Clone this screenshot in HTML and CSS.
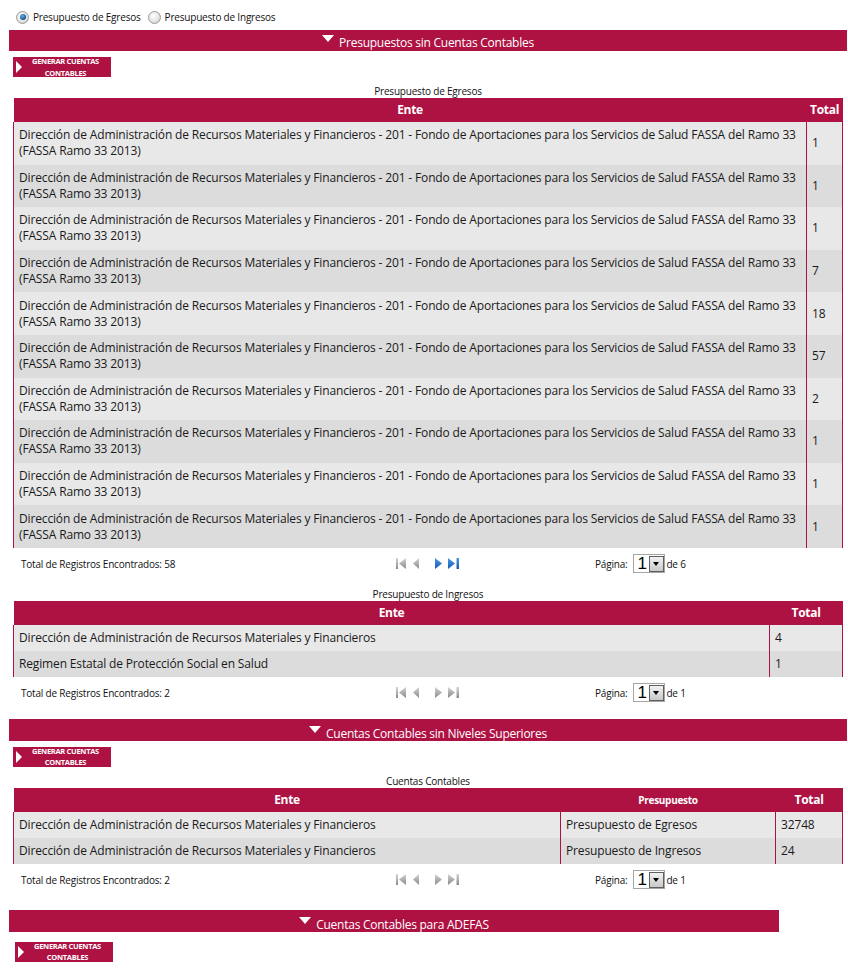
FILE: index.html
```html
<!DOCTYPE html>
<html lang="es">
<head>
  <meta charset="UTF-8" />
  <title>Cuentas Contables</title>
  <link rel="stylesheet" href="styles.css">
</head>
<body>
  <div class="page">
    <div class="radios">
      <label class="radio"><span class="radio-dot checked"></span>Presupuesto de Egresos</label>
      <label class="radio"><span class="radio-dot"></span>Presupuesto de Ingresos</label>
    </div>

    <!-- Presupuestos sin cuentas -->
    <div class="bar"><span class="bar-arrow"></span><span class="bar-title">Presupuestos sin Cuentas Contables</span></div>
    <div class="section">
      <a class="btn-generar"><span class="btn-arrow"></span><span class="btn-text">GENERAR CUENTAS<br>CONTABLES</span></a>
      <div class="caption">Presupuesto de Egresos</div>
      <table class="grid grid-egresos">
        <colgroup><col><col class="w-total-1"></colgroup>
        <thead><tr><th>Ente</th><th>Total</th></tr></thead>
        <tbody>
          <tr><td>Dirección de Administración de Recursos Materiales y Financieros - 201 - Fondo de Aportaciones para los Servicios de Salud FASSA del Ramo 33 (FASSA Ramo 33 2013)</td><td class="num">1</td></tr>
          <tr><td>Dirección de Administración de Recursos Materiales y Financieros - 201 - Fondo de Aportaciones para los Servicios de Salud FASSA del Ramo 33 (FASSA Ramo 33 2013)</td><td class="num">1</td></tr>
          <tr><td>Dirección de Administración de Recursos Materiales y Financieros - 201 - Fondo de Aportaciones para los Servicios de Salud FASSA del Ramo 33 (FASSA Ramo 33 2013)</td><td class="num">1</td></tr>
          <tr><td>Dirección de Administración de Recursos Materiales y Financieros - 201 - Fondo de Aportaciones para los Servicios de Salud FASSA del Ramo 33 (FASSA Ramo 33 2013)</td><td class="num">7</td></tr>
          <tr><td>Dirección de Administración de Recursos Materiales y Financieros - 201 - Fondo de Aportaciones para los Servicios de Salud FASSA del Ramo 33 (FASSA Ramo 33 2013)</td><td class="num">18</td></tr>
          <tr><td>Dirección de Administración de Recursos Materiales y Financieros - 201 - Fondo de Aportaciones para los Servicios de Salud FASSA del Ramo 33 (FASSA Ramo 33 2013)</td><td class="num">57</td></tr>
          <tr><td>Dirección de Administración de Recursos Materiales y Financieros - 201 - Fondo de Aportaciones para los Servicios de Salud FASSA del Ramo 33 (FASSA Ramo 33 2013)</td><td class="num">2</td></tr>
          <tr><td>Dirección de Administración de Recursos Materiales y Financieros - 201 - Fondo de Aportaciones para los Servicios de Salud FASSA del Ramo 33 (FASSA Ramo 33 2013)</td><td class="num">1</td></tr>
          <tr><td>Dirección de Administración de Recursos Materiales y Financieros - 201 - Fondo de Aportaciones para los Servicios de Salud FASSA del Ramo 33 (FASSA Ramo 33 2013)</td><td class="num">1</td></tr>
          <tr><td>Dirección de Administración de Recursos Materiales y Financieros - 201 - Fondo de Aportaciones para los Servicios de Salud FASSA del Ramo 33 (FASSA Ramo 33 2013)</td><td class="num">1</td></tr>
        </tbody>
      </table>
      <div class="pager">
        <span class="pager-total">Total de Registros Encontrados: 58</span>
        <span class="pager-nav">
          <svg class="ico ico-first" viewBox="0 0 10 11"><rect x="0" y="0" width="2" height="11" fill="url(#g-gray)"/><path d="M10 0 L3 5.5 L10 11 Z" fill="url(#g-gray)"/></svg>
          <svg class="ico ico-prev" viewBox="0 0 6 11"><path d="M6 0 L0 5.5 L6 11 Z" fill="url(#g-gray)"/></svg>
          <svg class="ico ico-next" viewBox="0 0 7 11"><path d="M0 0 L7 5.5 L0 11 Z" fill="url(#g-blue)"/></svg>
          <svg class="ico ico-last" viewBox="0 0 11 11"><path d="M0 0 L7 5.5 L0 11 Z" fill="url(#g-blue)"/><rect x="8.5" y="0" width="2.5" height="11" fill="url(#g-blue)"/></svg>
        </span>
        <span class="pager-page">Página: <span class="select"><span class="select-val">1</span><span class="select-btn"></span></span> de 6</span>
      </div>

      <div class="caption">Presupuesto de Ingresos</div>
      <table class="grid">
        <colgroup><col><col class="w-total-2"></colgroup>
        <thead><tr><th>Ente</th><th>Total</th></tr></thead>
        <tbody>
          <tr><td>Dirección de Administración de Recursos Materiales y Financieros</td><td class="num">4</td></tr>
          <tr><td>Regimen Estatal de Protección Social en Salud</td><td class="num">1</td></tr>
        </tbody>
      </table>
      <div class="pager">
        <span class="pager-total">Total de Registros Encontrados: 2</span>
        <span class="pager-nav">
          <svg class="ico ico-first" viewBox="0 0 10 11"><rect x="0" y="0" width="2" height="11" fill="url(#g-gray)"/><path d="M10 0 L3 5.5 L10 11 Z" fill="url(#g-gray)"/></svg>
          <svg class="ico ico-prev" viewBox="0 0 6 11"><path d="M6 0 L0 5.5 L6 11 Z" fill="url(#g-gray)"/></svg>
          <svg class="ico ico-next" viewBox="0 0 7 11"><path d="M0 0 L7 5.5 L0 11 Z" fill="url(#g-gray)"/></svg>
          <svg class="ico ico-last" viewBox="0 0 11 11"><path d="M0 0 L7 5.5 L0 11 Z" fill="url(#g-gray)"/><rect x="8.5" y="0" width="2.5" height="11" fill="url(#g-gray)"/></svg>
        </span>
        <span class="pager-page">Página: <span class="select"><span class="select-val">1</span><span class="select-btn"></span></span> de 1</span>
      </div>
    </div>

    <!-- Cuentas sin niveles superiores -->
    <div class="bar bar-gap"><span class="bar-arrow"></span><span class="bar-title">Cuentas Contables sin Niveles Superiores</span></div>
    <div class="section">
      <a class="btn-generar"><span class="btn-arrow"></span><span class="btn-text">GENERAR CUENTAS<br>CONTABLES</span></a>
      <div class="caption">Cuentas Contables</div>
      <table class="grid">
        <colgroup><col><col class="w-presupuesto"><col class="w-total-3"></colgroup>
        <thead><tr><th>Ente</th><th class="th-small">Presupuesto</th><th>Total</th></tr></thead>
        <tbody>
          <tr><td>Dirección de Administración de Recursos Materiales y Financieros</td><td>Presupuesto de Egresos</td><td class="num">32748</td></tr>
          <tr><td>Dirección de Administración de Recursos Materiales y Financieros</td><td>Presupuesto de Ingresos</td><td class="num">24</td></tr>
        </tbody>
      </table>
      <div class="pager">
        <span class="pager-total">Total de Registros Encontrados: 2</span>
        <span class="pager-nav">
          <svg class="ico ico-first" viewBox="0 0 10 11"><rect x="0" y="0" width="2" height="11" fill="url(#g-gray)"/><path d="M10 0 L3 5.5 L10 11 Z" fill="url(#g-gray)"/></svg>
          <svg class="ico ico-prev" viewBox="0 0 6 11"><path d="M6 0 L0 5.5 L6 11 Z" fill="url(#g-gray)"/></svg>
          <svg class="ico ico-next" viewBox="0 0 7 11"><path d="M0 0 L7 5.5 L0 11 Z" fill="url(#g-gray)"/></svg>
          <svg class="ico ico-last" viewBox="0 0 11 11"><path d="M0 0 L7 5.5 L0 11 Z" fill="url(#g-gray)"/><rect x="8.5" y="0" width="2.5" height="11" fill="url(#g-gray)"/></svg>
        </span>
        <span class="pager-page">Página: <span class="select"><span class="select-val">1</span><span class="select-btn"></span></span> de 1</span>
      </div>
    </div>

    <!-- ADEFAS -->
    <div class="bar bar-short"><span class="bar-arrow"></span><span class="bar-title">Cuentas Contables para ADEFAS</span></div>
    <div class="section section-adefas">
      <a class="btn-generar"><span class="btn-arrow"></span><span class="btn-text">GENERAR CUENTAS<br>CONTABLES</span></a>
    </div>
  </div>

  <svg class="defs" width="0" height="0">
    <defs>
      <linearGradient id="g-gray" x1="0" y1="0" x2="0" y2="1">
        <stop offset="0" stop-color="#d4d4d4"/>
        <stop offset="1" stop-color="#8a8a8a"/>
      </linearGradient>
      <linearGradient id="g-blue" x1="0" y1="0" x2="0" y2="1">
        <stop offset="0" stop-color="#4a9ae8"/>
        <stop offset="1" stop-color="#1658b0"/>
      </linearGradient>
    </defs>
  </svg>
</body>
</html>
```
FILE: styles.css
```css
body {
  margin: 0;
  background: #fff;
  font-family: "Open Sans", "Noto Sans", sans-serif;
  color: #111;
}
.page {
  padding: 10px 1px 0 9px;
}
.radios {
  display: flex;
  align-items: center;
  gap: 7px;
  height: 14px;
  padding-left: 7px;
  font-size: 10px;
  letter-spacing: -0.2px;
}
.radio {
  display: flex;
  align-items: center;
  gap: 4px;
}
.radio-dot {
  width: 11px;
  height: 11px;
  border-radius: 50%;
  border: 1px solid #9a9a9a;
  background: radial-gradient(circle at 40% 35%, #ffffff 0, #e4e4e4 55%, #c4c4c4 100%);
  position: relative;
}
.radio-dot.checked::after {
  content: "";
  position: absolute;
  left: 2.5px;
  top: 2.5px;
  width: 6px;
  height: 6px;
  border-radius: 50%;
  background: radial-gradient(circle at 40% 35%, #6ab0e8 0, #1d5f9c 60%, #0c3a66 100%);
}
.bar {
  margin-top: 6px;
  height: 21px;
  box-sizing: border-box;
  padding-top: 4px;
  width: 838px;
  background: #ae1243;
  color: #fff;
  display: flex;
  align-items: flex-start;
  justify-content: center;
  gap: 5px;
}
.bar-title {
  font-size: 12px;
  line-height: 17px;
  letter-spacing: -0.25px;
}
.bar-gap {
  margin-top: 10px;
  height: 22px;
  padding-top: 6px;
}
.bar-short {
  margin-top: 14px;
  width: 770px;
  height: 22px;
  padding-top: 6px;
}
.bar-arrow {
  width: 0;
  height: 0;
  margin-top: 1px;
  border-left: 6px solid transparent;
  border-right: 6px solid transparent;
  border-top: 7px solid #fff;
}
.section {
  padding: 6px 4px 0 4px;
  width: 830px;
}
.section-adefas {
  padding: 10px 6px 0;
}
.btn-generar {
  display: flex;
  align-items: center;
  width: 98px;
  height: 20px;
  background: #ae1243;
  color: #fff;
  overflow: hidden;
}
.btn-arrow {
  width: 0;
  height: 0;
  margin-left: 3px;
  border-top: 6px solid transparent;
  border-bottom: 6px solid transparent;
  border-left: 6px solid #fff;
}
.btn-text {
  flex: 1;
  text-align: center;
  font-size: 7.5px;
  font-weight: bold;
  line-height: 11.5px;
  letter-spacing: -0.3px;
  padding: 1px 2px 0 0;
}
.caption {
  margin-top: 8px;
  height: 13px;
  line-height: 13px;
  text-align: center;
  font-size: 10px;
  letter-spacing: -0.2px;
}
.grid {
  width: 830px;
  border-collapse: collapse;
  table-layout: fixed;
  font-size: 12px;
  letter-spacing: -0.15px;
}
.w-total-1 { width: 36px; }
.w-total-2 { width: 73px; }
.w-total-3 { width: 67px; }
.w-presupuesto { width: 215px; }
.grid th {
  background: #ae1243;
  color: #fff;
  font-weight: bold;
  line-height: 16px;
  padding: 4px 0;
  text-align: center;
  letter-spacing: -0.3px;
}
.grid th.th-small {
  font-size: 10px;
}
.grid td {
  line-height: 16px;
  padding: 5px 5px;
  text-align: left;
  border-left: 1px solid #ae1243;
  color: #1a1a1a;
}
.grid td:last-child {
  border-right: 1px solid #ae1243;
}
.grid tbody tr:nth-child(odd) td {
  background: #e8e8e8;
}
.grid tbody tr:nth-child(even) td {
  background: #dcdcdc;
}
.grid-egresos td {
  height: 32.6px;
}
.grid td.num {
  vertical-align: middle;
}
.pager {
  display: grid;
  grid-template-columns: 382px 200px auto;
  align-items: center;
  height: 32px;
  font-size: 10px;
  letter-spacing: -0.2px;
}
.pager-total {
  padding-left: 8px;
}
.pager-nav {
  display: flex;
  align-items: center;
}
.ico {
  height: 11px;
  display: block;
}
.ico-first { width: 10px; margin-left: 1px; }
.ico-prev { width: 6px; margin-left: 7px; }
.ico-next { width: 7px; margin-left: 16px; }
.ico-last { width: 11px; margin-left: 6px; }
.pager-page {
  display: flex;
  align-items: center;
  gap: 6px;
}
.select {
  display: flex;
  align-items: center;
  width: 32px;
  height: 19px;
  box-sizing: border-box;
  border: 1px solid #a5a5a5;
  background: #fff;
  margin-right: -5px;
}
.select-val {
  flex: 1;
  font-family: "Liberation Sans", sans-serif;
  font-size: 17px;
  line-height: 17px;
  padding-left: 3px;
  color: #000;
}
.select-btn {
  width: 15px;
  height: 16px;
  margin-right: 0.5px;
  box-sizing: border-box;
  border: 1px solid #5f5f5f;
  background: linear-gradient(#f2f2f2, #c8c8c8);
  position: relative;
}
.select-btn::after {
  content: "";
  position: absolute;
  left: 3px;
  top: 5px;
  border-left: 3.5px solid transparent;
  border-right: 3.5px solid transparent;
  border-top: 4px solid #000;
}
.defs {
  position: absolute;
}
```
